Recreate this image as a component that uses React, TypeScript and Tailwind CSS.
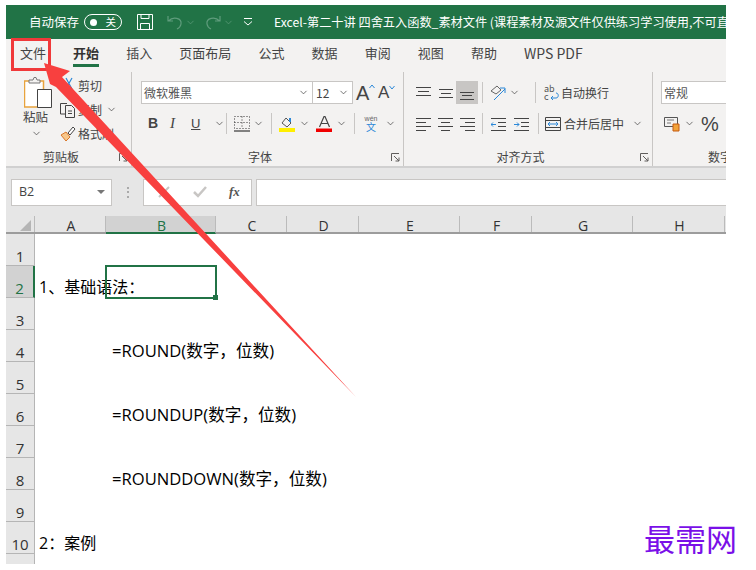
import { ChevronDown } from "lucide-react";

const CJK = "font-['Noto_Sans_CJK_SC','Liberation_Sans',sans-serif]";
const OPEN = "font-['Open_Sans','Noto_Sans_CJK_SC',sans-serif]";

const tabs = ["文件", "开始", "插入", "页面布局", "公式", "数据", "审阅", "视图", "帮助", "WPS PDF"];

const columns = [
  { name: "A", w: "w-[71px]" },
  { name: "B", w: "w-[110px]", active: true },
  { name: "C", w: "w-[71px]" },
  { name: "D", w: "w-[72px]" },
  { name: "E", w: "w-[101px]" },
  { name: "F", w: "w-[72px]" },
  { name: "G", w: "w-[101px]" },
  { name: "H", w: "w-[92px]" },
];

const rows: { n: number; text?: string; indent?: boolean }[] = [
  { n: 1 },
  { n: 2, text: "1、基础语法：" },
  { n: 3 },
  { n: 4, text: "=ROUND(数字，位数)", indent: true },
  { n: 5 },
  { n: 6, text: "=ROUNDUP(数字，位数)", indent: true },
  { n: 7 },
  { n: 8, text: "=ROUNDDOWN(数字，位数)", indent: true },
  { n: 9 },
  { n: 10, text: "2：案例" },
];

const Chev = ({ className = "text-[#444]" }: { className?: string }) => (
  <ChevronDown size={11} strokeWidth={1.6} className={className} />
);

const Sep = () => <div className="h-[21px] w-px bg-[#c8c6c4]" />;

const Launcher = () => (
  <svg width="9" height="9" viewBox="0 0 9 9" fill="none" stroke="#605e5c">
    <path d="M.5 8V.5H8M3 3l5 5M8 4.500V8H4.500" />
  </svg>
);

// three horizontal lines, widths change with the alignment
const AlignLines = ({ d, blue }: { d: string; blue?: string }) => (
  <svg width="16" height="14" viewBox="0 0 16 14" fill="none" stroke="#444" strokeWidth="1">
    <path d={d} />
    {blue && <path d={blue} stroke="#2b88d8" />}
  </svg>
);

const GroupLabel = ({ children, launcher }: { children: string; launcher?: boolean }) => (
  <div className="mb-[1px] mt-auto flex h-[17px] items-center">
    <span className="flex-1 pr-[3px] text-center text-[12px] leading-none text-[#444]">{children}</span>
    {launcher && <span className="mr-[3px] mt-[2px] flex"><Launcher /></span>}
  </div>
);

function TitleBar() {
  return (
    <div className="flex h-[34px] items-center overflow-hidden bg-[#217346] text-[12.5px] text-white">
      <span className="ml-[23px] w-[48px] shrink-0 whitespace-nowrap">自动保存</span>
      <div className="ml-[7px] flex h-[16px] w-[38px] shrink-0 items-center justify-between rounded-full border border-white pl-[5px] pr-[5px]">
        <span className="h-[7px] w-[7px] rounded-full bg-white" />
        <span className="text-[10.5px] leading-none">关</span>
      </div>
      <svg className="ml-[15px] shrink-0" width="16" height="16" viewBox="0 0 16 16" fill="none" stroke="#fff">
        <path d="M.5.5h15v15H.5zM4 .5v4h8v-4M3.500 15.500v-6h9v6" />
      </svg>
      <svg className="ml-[14px] shrink-0" width="16" height="16" viewBox="0 0 16 16" fill="none" stroke="#5f9c7c" strokeWidth="1.2">
        <path d="M1 2v5h5M1.500 7C6 2 15 4 14 10c-.5 3-3 4.500-4 5" />
      </svg>
      <Chev className="ml-[2px] shrink-0 text-[#5f9c7c]" />
      <svg className="ml-[9px] shrink-0" width="16" height="16" viewBox="0 0 16 16" fill="none" stroke="#5f9c7c" strokeWidth="1.2">
        <path d="M15 2v5h-5M14.500 7C10 2 1 4 2 10c.5 3 3 4.500 4 5" />
      </svg>
      <Chev className="ml-[2px] shrink-0 text-[#5f9c7c]" />
      <svg className="ml-[10px] shrink-0" width="8" height="8" viewBox="0 0 8 8" fill="none" stroke="#fff">
        <path d="M0 .5h8M0 3.500l4 3.500 4-3.500" />
      </svg>
      <span className="ml-[22px] whitespace-nowrap text-[12.2px]">
        Excel-第二十讲 四舍五入函数_素材文件 (课程素材及源文件仅供练习学习使用,不可直接
      </span>
    </div>
  );
}

function Tabs() {
  return (
    <div className="flex h-[33px] gap-[27.1px] bg-[#f3f2f1] pl-[14px] pt-[3px] text-[13px] text-[#444]">
      {tabs.map((t) => (
        <div key={t} className="relative flex h-[22px] items-center whitespace-nowrap">
          <span className={t === "开始" ? "font-bold text-[#333]" : t === "WPS PDF" ? "text-[14px]" : ""}>{t}</span>
          {t === "开始" && <span className="absolute bottom-[-3px] left-0 right-0 h-[3px] bg-[#217346]" />}
        </div>
      ))}
    </div>
  );
}

function Clipboard() {
  return (
    <div className="flex w-[126px] shrink-0 flex-col border-r border-[#c8c6c4]">
      <div className="flex pl-[17px] pt-[5px]">
        <div className="flex w-[35px] flex-col items-start">
          <svg className="ml-[1px]" width="29" height="31" viewBox="0 0 29 31" fill="none">
            <path d="M.5 4h19v26H.5z" fill="#fff" stroke="#e8a33d" strokeWidth="1.500" />
            <path d="M5 5V3h4l1-2.500h2L13 3h3v3H5z" fill="#f3f2f1" stroke="#777" />
            <path d="M13.500 12.500h14v18h-14z" fill="#fff" stroke="#444" />
          </svg>
          <span className="mt-[1px] text-[12.5px] leading-[16px] text-[#444]">粘贴</span>
          <Chev className="ml-[8px] mt-[3px] text-[#444]" />
        </div>
        <div className="ml-[2px] flex flex-col gap-[7px] text-[12px] leading-[17px] text-[#444]">
          <div className="flex items-center">
            <svg width="16" height="17" viewBox="0 0 16 17" fill="none" stroke="#2b88d8" strokeWidth="1.200">
              <path d="M6 1l6 11M12 1L8 8" />
            </svg>
            <span className="ml-[2px]">剪切</span>
          </div>
          <div className="flex items-center">
            <svg width="16" height="17" viewBox="0 0 16 17" fill="none" stroke="#444">
              <path d="M5 13H.5V2.500H7M5.500 4.500h6l3 3v9h-9zM8 10h4M8 12.500h4" />
            </svg>
            <span className="ml-[2px] whitespace-nowrap">复制</span>
            <Chev className="ml-[4px]" />
          </div>
          <div className="flex items-center">
            <svg width="16" height="17" viewBox="0 0 16 17" fill="none">
              <path d="M1 10l5-3 4 5-4 4z" fill="#f8c78a" stroke="#d9772a" />
              <path d="M8 8l5-6 2 2-5 6z" fill="#fff" stroke="#444" />
            </svg>
            <span className="ml-[2px] whitespace-nowrap">格式刷</span>
          </div>
        </div>
      </div>
      <GroupLabel launcher>剪贴板</GroupLabel>
    </div>
  );
}

function FontGroup() {
  return (
    <div className="flex w-[272px] shrink-0 flex-col border-r border-[#c8c6c4]">
      <div className="flex items-center pl-[9px] pt-[9px]">
        <div className="flex h-[23px] w-[172px] items-center justify-between border border-[#c8c6c4] bg-white pl-[2px] pr-[3px] text-[12px] text-[#555]">
          微软雅黑 <Chev />
        </div>
        <div className="flex h-[23px] w-[40px] items-center justify-between border border-l-0 border-[#c8c6c4] bg-white pl-[3px] pr-[3px] text-[12px] text-[#444]">
          12 <Chev />
        </div>
        <span className="ml-[3px] flex w-[22px] items-start font-['Liberation_Sans',sans-serif] text-[20px] font-light leading-none text-[#444]">
          A
          <svg className="mt-[1px]" width="6" height="5" viewBox="0 0 6 5" fill="none" stroke="#2b88d8">
            <path d="M.5 4L3 1l2.500 3" />
          </svg>
        </span>
        <span className="flex w-[20px] items-start font-['Liberation_Sans',sans-serif] text-[17px] leading-none text-[#444]">
          A
          <svg className="mt-[1px]" width="6" height="5" viewBox="0 0 6 5" fill="none" stroke="#2b88d8">
            <path d="M.5 1L3 4l2.500-3" />
          </svg>
        </span>
      </div>
      <div className="mt-[8px] flex h-[23px] items-center pl-[16px] font-['Liberation_Sans',sans-serif] text-[#444]">
        <span className="w-[22px] text-[14px] font-bold">B</span>
        <span className="w-[21px] font-['Liberation_Serif',serif] text-[15px] italic">I</span>
        <span className="w-[23px] text-[13px] underline">U</span>
        <Chev />
        <span className="w-[1px]" />
        <Sep />
        <svg className="ml-[7px]" width="16" height="16" viewBox="0 0 16 16" fill="none" stroke="#333" strokeDasharray="1 2">
          <path d="M.5.5h15v12H.5zM8 .5v12M.5 6.500h15" />
          <path d="M0 15h16" stroke="#111" strokeWidth="1" strokeDasharray="none" />
        </svg>
        <Chev className="ml-[3px] text-[#444]" />
        <span className="w-[7px]" />
        <Sep />
        <svg className="ml-[7px]" width="17" height="17" viewBox="0 0 17 17" fill="none">
          <path d="M3 8l4-5 5 5-4 4z" stroke="#555" />
          <path d="M10 3h2v4h-2z" fill="#2b88d8" />
          <path d="M0 13h16v4H0z" fill="#ffef00" />
        </svg>
        <Chev className="ml-[3px] text-[#444]" />
        <span className="w-[6px]" />
        <svg width="17" height="17" viewBox="0 0 17 17" fill="none">
          <path d="M3.500 12L8 1.500h1L13.500 12M5.500 8.500h6" stroke="#444" strokeWidth="1.200" />
          <path d="M0 13.500h16v3.500H0z" fill="#f00000" />
        </svg>
        <Chev className="ml-[3px] text-[#444]" />
        <span className="w-[7px]" />
        <Sep />
        <div className="ml-[8px] flex w-[16px] flex-col items-center leading-none">
          <span className="text-[7px] text-[#666]">wén</span>
          <span className={`${CJK} text-[10px] text-[#2b88d8]`}>文</span>
        </div>
        <Chev className="ml-[6px] text-[#444]" />
      </div>
      <GroupLabel launcher>字体</GroupLabel>
    </div>
  );
}

function AlignGroup() {
  return (
    <div className="flex w-[249px] shrink-0 flex-col border-r border-[#c8c6c4]">
      <div className="mt-[9px] flex h-[23px] items-center pl-[12px] text-[12px] text-[#444]">
        <AlignLines d="M0 1.500h15M2 5.500h11M0 9.500h15" />
        <span className="w-[6px]" />
        <AlignLines d="M1 3.500h14M3 7.500h10M1 11.500h14" />
        <div className="ml-[2px] flex h-[23px] w-[22px] items-center justify-center bg-[#c8c6c4]">
          <AlignLines d="M1 6.500h14M3 9.500h10M1 13.500h14" />
        </div>
        <span className="w-[4px]" />
        <Sep />
        <svg className="ml-[7px]" width="17" height="17" viewBox="0 0 17 17" fill="none">
          <path d="M1 7l6-5 4 4-5 4z" stroke="#666" />
          <path d="M4 16L15 5M10 4h5v5" stroke="#2b88d8" />
        </svg>
        <Chev className="ml-[2px] text-[#444]" />
        <span className="w-[15px]" />
        <Sep />
        <svg className="ml-[8px] overflow-visible" width="16" height="18" viewBox="0 0 16 18" fill="none" stroke="#2b88d8">
          <text x="0" y="8" fontSize="9" fill="#555" stroke="none">ab</text>
          <text x="0" y="16" fontSize="9" fill="#555" stroke="none">c</text>
          <path d="M7 14h5c3 0 3-5 0-5M7 14l2-2M7 14l2 2" />
        </svg>
        <span className="ml-[1px] whitespace-nowrap">自动换行</span>
      </div>
      <div className="mt-[8px] flex h-[23px] items-center pl-[12px] text-[12px] text-[#444]">
        <AlignLines d="M0 1.500h15M0 5.500h10M0 9.500h15M0 13.500h10" />
        <span className="w-[6px]" />
        <AlignLines d="M0 1.500h15M3 5.500h9M0 9.500h15M3 13.500h9" />
        <span className="w-[6px]" />
        <AlignLines d="M0 1.500h15M5 5.500h10M0 9.500h15M5 13.500h10" />
        <span className="w-[6px]" />
        <Sep />
        <span className="w-[8px]" />
        <AlignLines d="M0 1.500h15M7 5.500h8M7 9.500h8M0 13.500h15" blue="M5 7.500H0M2 5.500l-2 2 2 2" />
        <span className="w-[7px]" />
        <AlignLines d="M0 1.500h15M7 5.500h8M7 9.500h8M0 13.500h15" blue="M0 7.500h5M3 5.500l2 2-2 2" />
        <span className="w-[8px]" />
        <Sep />
        <svg className="ml-[6px]" width="16" height="16" viewBox="0 0 16 16" fill="none" stroke="#444">
          <path d="M.5 1.500h15v13H.5zM.5 4.500h15M.5 11.500h15" />
          <path d="M3 8h10M5 6L3 8l2 2M11 6l2 2-2 2" stroke="#2b88d8" />
        </svg>
        <span className="ml-[3px] whitespace-nowrap">合并后居中</span>
        <Chev className="ml-[8px] text-[#444]" />
      </div>
      <GroupLabel launcher>对齐方式</GroupLabel>
    </div>
  );
}

const NumberLabel = () => (
  <div className="mb-[1px] mt-auto flex h-[17px] items-center whitespace-nowrap pl-[47px] text-[12px] leading-none text-[#444]">
    数字
  </div>
);

function NumberGroup() {
  return (
    <div className="flex min-w-0 flex-1 flex-col pl-[8px]">
      <div className="mt-[9px] flex h-[23px] items-center border border-r-0 border-[#c8c6c4] bg-white pl-[2px] text-[12px] text-[#555]">
        常规
      </div>
      <div className="mt-[8px] flex h-[23px] items-center pl-[3px] text-[#444]">
        <svg width="16" height="17" viewBox="0 0 16 17" fill="none">
          <path d="M.5 2.500h13v9H.5z" stroke="#555" />
          <path d="M3 5h7M3 8h4" stroke="#777" />
          <path d="M9 9h6v7H9z" fill="#f2a33a" stroke="#c55a11" />
        </svg>
        <Chev className="ml-[4px] text-[#444]" />
        <span className="ml-[6px] font-['Liberation_Sans',sans-serif] text-[20px] font-light leading-none">%</span>
      </div>
      <NumberLabel />
    </div>
  );
}

function FormulaBar() {
  return (
    <div className="flex h-[48px] items-center bg-[#e6e6e6] pb-[1px] pl-[5px] pt-[1px]">
      <div className="flex h-[27px] w-[101px] items-center justify-between border border-[#c8c6c4] bg-white pl-[7px] pr-[6px] font-['Open_Sans',sans-serif] text-[12.5px] text-[#444]">
        B2
        <span className="h-0 w-0 border-x-[4px] border-t-[4px] border-x-transparent border-t-[#777]" />
      </div>
      <div className="ml-[15px] flex h-[11px] w-[2px] flex-col justify-between">
        <span className="h-[2px] w-[2px] bg-[#aaa]" />
        <span className="h-[2px] w-[2px] bg-[#aaa]" />
        <span className="h-[2px] w-[2px] bg-[#aaa]" />
      </div>
      <div className="ml-[14px] flex h-[27px] w-[109px] items-center border border-[#c8c6c4] bg-white">
        <svg className="ml-[14px]" width="12" height="12" viewBox="0 0 12 12" stroke="#c8c6c4" strokeWidth="2">
          <path d="M1 1l10 10M11 1L1 11" />
        </svg>
        <svg className="ml-[23px]" width="14" height="12" viewBox="0 0 14 12" fill="none" stroke="#c8c6c4" strokeWidth="2.500">
          <path d="M1 6l4 4 8-9" />
        </svg>
        <span className="ml-[22px] font-['Liberation_Serif',serif] text-[13px] font-bold italic text-[#555]">fx</span>
      </div>
      <div className="ml-[4px] h-[27px] flex-1 border border-r-0 border-[#c8c6c4] bg-white" />
    </div>
  );
}

function ColumnHeader() {
  return (
    <div className={`${OPEN} flex h-[18px] border-b-2 border-[#9c9c9c] bg-[#e6e6e6] text-[14px] leading-none text-[#333]`}>
      <div className="flex w-[29px] shrink-0 items-end justify-end border-r border-[#bbb] pb-[1px] pr-[3px]">
        <span className="h-0 w-0 border-b-[11px] border-l-[11px] border-b-[#b5b5b5] border-l-transparent" />
      </div>
      {columns.map((c) => (
        <div
          key={c.name}
          className={`flex shrink-0 items-end justify-center border-r border-[#bbb] ${c.w} ${
            c.active ? "-mb-[2px] border-b-2 border-b-[#217346] bg-[#d2d2d2] text-[#217346]" : ""
          }`}
        >
          <span className="-mb-[1px] ml-[2px]">{c.name}</span>
        </div>
      ))}
    </div>
  );
}

function Sheet() {
  return (
    <div className="flex-1 overflow-hidden bg-white">
      {rows.map((r) => (
        <div key={r.n} className="flex h-[32px]">
          <div
            className={`${OPEN} flex w-[29px] shrink-0 items-center justify-center border-b border-r border-[#b5b5b5] pt-[13px] text-[15px] ${
              r.n === 2 ? "border-r-2 border-r-[#217346] bg-[#d2d2d2] text-[#217346]" : "bg-[#e6e6e6] text-[#333]"
            }`}
          >
            {r.n}
          </div>
          <div
            className={`${OPEN} relative flex flex-1 items-end whitespace-nowrap leading-[22px] text-black ${
              r.indent ? "pl-[77px] text-[16.6px]" : "pl-[4px] text-[16px]"
            }`}
          >
            {r.text}
            {r.n === 2 && (
              <div className="absolute left-[70px] top-[-1px] h-[34px] w-[112px] border-2 border-[#217346]">
                <span className="absolute bottom-[-3px] right-[-3px] h-[5px] w-[5px] bg-[#217346]" />
              </div>
            )}
          </div>
        </div>
      ))}
      <div className="h-[10px] w-[29px] border-r border-[#b5b5b5] bg-[#e6e6e6]" />
    </div>
  );
}

export default function App() {
  return (
    <div className={`${CJK} relative h-[570px] w-[756px] overflow-hidden bg-white pl-[6px] pt-[5px]`}>
      <div className="flex h-[559px] w-[720px] flex-col overflow-hidden">
        <TitleBar />
        <Tabs />
        <div className="flex h-[96px] border-b-2 border-[#d0d0d0] bg-[#f3f2f1]">
          <Clipboard />
          <FontGroup />
          <AlignGroup />
          <NumberGroup />
        </div>
        <FormulaBar />
        <ColumnHeader />
        <Sheet />
      </div>

      {/* annotation drawn over the screenshot */}
      <div className="absolute left-[11px] top-[38px] h-[33px] w-[40px] border-[3px] border-[#f0393a]" />
      <svg className="absolute left-0 top-0" width="756" height="570" viewBox="0 0 756 570">
        <polygon points="44,63 70,71 62,77 356,397 56,87 50,84" fill="#f8403f" />
      </svg>

      <div className="absolute left-[644px] top-[518px] text-[31px] leading-[40px] text-[#7a10e8]">最需网</div>
    </div>
  );
}
